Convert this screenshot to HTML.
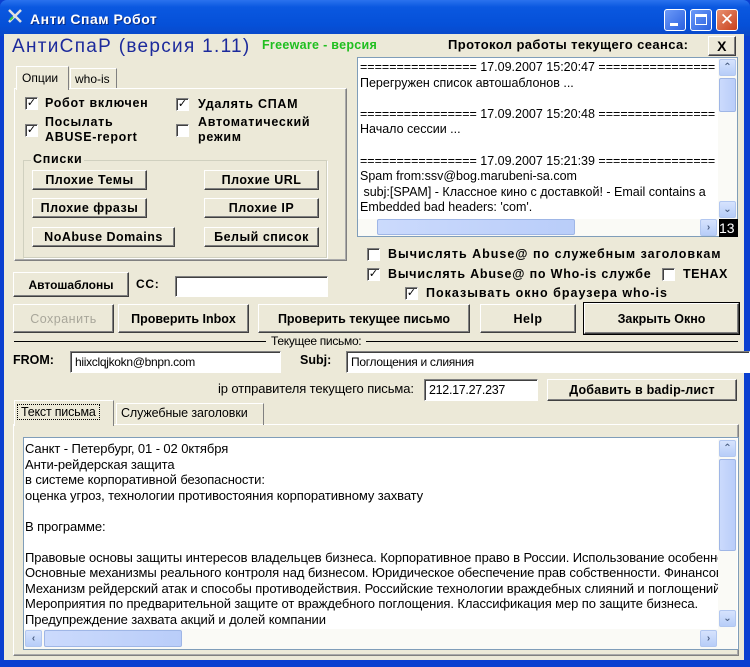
<!DOCTYPE html>
<html><head><meta charset="utf-8"><style>
*{box-sizing:border-box;margin:0;padding:0}
body{width:750px;height:667px;overflow:hidden;background:#0a3fd0;font-family:"Liberation Sans","DejaVu Sans",sans-serif;position:relative}
.a{position:absolute}
.win{left:4px;top:34px;width:740px;height:626px;background:#ece9d8}
.btn{position:absolute;background:#ece9d8;border:1px solid;border-color:#fff #404040 #404040 #fff;box-shadow:inset -1px -1px 0 #808080;font-weight:bold;font-size:12.5px;letter-spacing:0.5px;text-align:center;color:#000;display:flex;align-items:center;justify-content:center;white-space:nowrap}
.cb{position:absolute;width:13px;height:13px;background:#fff;border:1px solid;border-color:#808080 #fff #fff #808080;box-shadow:inset 1px 1px 0 #404040;font-size:11px;line-height:11px;text-align:center;font-weight:bold}
.t{position:absolute;white-space:nowrap;font-size:12.5px;color:#000}
.b{font-weight:bold;letter-spacing:0.7px}
.inp{position:absolute;background:#fff;border:1px solid;border-color:#808080 #fff #fff #808080;box-shadow:inset 1px 1px 0 #404040;font-size:12px;padding:3px 0 0 4px;white-space:nowrap;overflow:hidden}
.sb{position:absolute;background:#fafaf6}
.arr{position:absolute;width:17px;height:17px;background:linear-gradient(#d6e3fd,#b7cdf8);border:1px solid #b2c7f0;border-radius:2px;color:#4d6185;font-size:10px;text-align:center;line-height:15px;font-weight:bold}
.thumb{position:absolute;background:linear-gradient(90deg,#cbdafc,#b9cdf9);border:1px solid #9fb6e6;border-radius:2px}
.log div{height:15.6px;white-space:nowrap;font-size:12.5px}
.txt div{height:15.5px;white-space:nowrap;font-size:13px;letter-spacing:-0.1px}
</style></head><body>
<div class="a" style="left:0;top:0;width:750px;height:36px;background:linear-gradient(#2a72ee,#0a58e0 20%,#0550d8 70%,#0a48c8);border-radius:7px 7px 0 0"></div>
<div class="a" style="left:7px;top:8px;width:16px;height:16px;">
<svg width="16" height="16"><path d="M2 2L14 14M14 2L2 14" stroke="#e0e0e0" stroke-width="2.5"/><path d="M3 12l3-3" stroke="#4c4" stroke-width="2"/></svg></div>
<div class="t" style="left:30px;top:11px;color:#fff;font-size:14px;font-weight:bold;letter-spacing:0.5px;text-shadow:1px 1px #0a2a80">Анти Спам Робот</div>
<div class="a" style="left:664px;top:9px;width:22px;height:22px;background:linear-gradient(135deg,#6c9af8,#2b61e0);border:1px solid #fff;border-radius:3px"><div class="a" style="left:5px;top:13px;width:8px;height:3px;background:#fff"></div></div>
<div class="a" style="left:690px;top:9px;width:22px;height:22px;background:linear-gradient(135deg,#6c9af8,#2b61e0);border:1px solid #fff;border-radius:3px"><div class="a" style="left:4px;top:4px;width:12px;height:11px;border:1px solid #fff;border-top-width:3px"></div></div>
<div class="a" style="left:716px;top:9px;width:22px;height:22px;background:linear-gradient(135deg,#e89070,#c8401c);border:1px solid #fff;border-radius:3px;color:#fff;font-weight:bold;font-size:17px;text-align:center;line-height:20px">✕</div>

<div class="a win"></div>
<div class="t" style="left:12px;top:36px;font-size:19px;color:#1c2a9c;letter-spacing:1.3px">АнтиСпаР (версия 1.11)</div>
<div class="t b" style="left:262px;top:38px;color:#1fbf1f;font-size:12.5px;letter-spacing:0.3px">Freeware - версия</div>
<div class="t b" style="left:448px;top:37px;font-size:13px;letter-spacing:0.4px">Протокол работы текущего сеанса:</div>
<div class="btn" style="left:708px;top:36px;width:28px;height:20px;font-size:14px">X</div>

<div class="a" style="left:357px;top:57px;width:381px;height:180px;background:#fff;border:1px solid #7f9db9"></div>
<div class="a log" style="left:360px;top:60px;width:358px;height:158px;overflow:hidden">
<div>================ 17.09.2007 15:20:47 ================</div>
<div>Перегружен список автошаблонов ...</div><div></div>
<div>================ 17.09.2007 15:20:48 ================</div>
<div>Начало сессии ...</div><div></div>
<div>================ 17.09.2007 15:21:39 ================</div>
<div>Spam from:ssv@bog.marubeni-sa.com</div>
<div>&nbsp;subj:[SPAM] - Классное кино с доставкой! - Email contains a</div>
<div>Embedded bad headers: 'com'.</div>
</div>
<div class="sb" style="left:718px;top:58px;width:19px;height:161px"></div>
<div class="arr" style="left:719px;top:59px">⌃</div>
<div class="thumb" style="left:719px;top:78px;width:17px;height:34px"></div>
<div class="arr" style="left:719px;top:201px">⌄</div>
<div class="sb" style="left:358px;top:219px;width:360px;height:17px"></div>
<div class="thumb" style="left:377px;top:219px;width:198px;height:16px"></div>
<div class="arr" style="left:700px;top:219px">›</div>
<div class="a" style="left:719px;top:219px;width:19px;height:18px;background:#000;color:#fff;font-size:14px;line-height:18px">13</div>

<div class="a" style="left:14px;top:88px;width:333px;height:173px;border:1px solid;border-color:#fff #808080 #808080 #fff;box-shadow:inset -1px -1px 0 #aaa"></div>
<div class="a" style="left:16px;top:66px;width:53px;height:24px;background:#ece9d8;border:1px solid;border-color:#fff #808080 transparent #fff;border-bottom:none"></div>
<div class="t" style="left:22px;top:71px;font-size:12px">Опции</div>
<div class="a" style="left:70px;top:68px;width:47px;height:20px;border:1px solid;border-color:#fff #808080 transparent #fff;border-bottom:none"></div>
<div class="t" style="left:75px;top:72px;font-size:12px">who-is</div>

<div class="cb" style="left:25px;top:97px">✓</div><div class="t b" style="left:45px;top:96px">Робот включен</div>
<div class="cb" style="left:176px;top:98px">✓</div><div class="t b" style="left:198px;top:97px">Удалять СПАМ</div>
<div class="cb" style="left:25px;top:124px">✓</div><div class="t b" style="left:45px;top:115px;line-height:15px">Посылать<br>ABUSE-report</div>
<div class="cb" style="left:176px;top:124px"></div><div class="t b" style="left:198px;top:115px;line-height:15px">Автоматический<br>режим</div>

<div class="a" style="left:23px;top:160px;width:304px;height:98px;border:1px solid;border-color:#d0d0bf;box-shadow:1px 1px 0 #fff"></div>
<div class="t b" style="left:31px;top:152px;background:#ece9d8;padding:0 2px">Списки</div>
<div class="btn" style="left:32px;top:170px;width:115px;height:20px">Плохие Темы</div>
<div class="btn" style="left:204px;top:170px;width:115px;height:20px">Плохие URL</div>
<div class="btn" style="left:32px;top:198px;width:115px;height:20px">Плохие фразы</div>
<div class="btn" style="left:204px;top:198px;width:115px;height:20px">Плохие IP</div>
<div class="btn" style="left:32px;top:227px;width:143px;height:20px">NoAbuse Domains</div>
<div class="btn" style="left:204px;top:227px;width:115px;height:20px">Белый список</div>

<div class="cb" style="left:367px;top:248px"></div><div class="t b" style="left:388px;top:247px;letter-spacing:1px">Вычислять Abuse@ по служебным заголовкам</div>
<div class="cb" style="left:367px;top:268px">✓</div><div class="t b" style="left:388px;top:267px;letter-spacing:0.8px">Вычислять Abuse@ по Who-is службе</div>
<div class="cb" style="left:662px;top:268px"></div><div class="t b" style="left:683px;top:267px;letter-spacing:0.5px">ТЕНАХ</div>
<div class="cb" style="left:405px;top:287px">✓</div><div class="t b" style="left:426px;top:286px;letter-spacing:1px">Показывать окно браузера who-is</div>

<div class="btn" style="left:13px;top:272px;width:116px;height:25px;font-size:12px;letter-spacing:0">Автошаблоны</div>
<div class="t b" style="left:136px;top:277px;font-size:12px">CC:</div>
<div class="inp" style="left:175px;top:276px;width:153px;height:21px"></div>

<div class="btn" style="left:13px;top:304px;width:101px;height:29px;color:#a8a69a;font-weight:normal">Сохранить</div>
<div class="btn" style="left:118px;top:304px;width:131px;height:29px;letter-spacing:0">Проверить Inbox</div>
<div class="btn" style="left:258px;top:304px;width:212px;height:29px;letter-spacing:0">Проверить текущее письмо</div>
<div class="btn" style="left:480px;top:304px;width:96px;height:29px">Help</div>
<div class="btn" style="left:584px;top:303px;width:155px;height:31px;outline:1px solid #000;letter-spacing:0">Закрыть Окно</div>

<div class="a" style="left:14px;top:341px;width:724px;height:1px;background:#000"></div>
<div class="t" style="left:266px;top:334px;background:#ece9d8;padding:0 5px;font-size:12px;letter-spacing:-0.3px">Текущее письмо:</div>

<div class="t b" style="left:13px;top:353px;letter-spacing:0">FROM:</div>
<div class="inp" style="left:70px;top:351px;width:211px;height:22px;letter-spacing:-0.3px">hiixclqjkokn@bnpn.com</div>
<div class="t b" style="left:300px;top:353px;letter-spacing:0">Subj:</div>
<div class="inp" style="left:346px;top:351px;width:404px;height:22px;letter-spacing:-0.3px">Поглощения и слияния</div>

<div class="t" style="left:218px;top:381px;font-size:13px;letter-spacing:-0.1px">ip отправителя текущего письма:</div>
<div class="inp" style="left:424px;top:379px;width:114px;height:22px;letter-spacing:-0.3px;font-size:12.5px">212.17.27.237</div>
<div class="btn" style="left:547px;top:379px;width:190px;height:22px;letter-spacing:0.2px">Добавить в badip-лист</div>

<div class="a" style="left:13px;top:424px;width:726px;height:232px;border:1px solid;border-color:#fff #808080 #808080 #fff;box-shadow:inset -1px -1px 0 #aaa"></div>
<div class="a" style="left:14px;top:400px;width:100px;height:26px;background:#ece9d8;border:1px solid;border-color:#fff #808080 transparent #fff;border-bottom:none"></div>
<div class="t" style="left:17px;top:404px;border:1px dotted #000;padding:0 3px;font-size:12.5px;letter-spacing:-0.2px">Текст письма</div>
<div class="a" style="left:116px;top:403px;width:148px;height:22px;border:1px solid;border-color:#fff #808080 transparent #fff;border-bottom:none"></div>
<div class="t" style="left:121px;top:406px;font-size:12.5px;letter-spacing:-0.1px">Служебные заголовки</div>

<div class="a" style="left:23px;top:437px;width:716px;height:213px;background:#fff;border:1px solid #7f9db9"></div>
<div class="a txt" style="left:25px;top:441px;width:693px;height:188px;overflow:hidden">
<div>Санкт - Петербург, 01 - 02 0ктября</div>
<div>Анти-рейдерская защита</div>
<div>в системе корпоративной безопасности:</div>
<div>оценка угроз, технологии противостояния корпоративному захвату</div>
<div></div>
<div>В программе:</div>
<div></div>
<div>Правовые основы защиты интересов владельцев бизнеса. Корпоративное право в России. Использование особенностей</div>
<div>Основные механизмы реального контроля над бизнесом. Юридическое обеспечение прав собственности. Финансовые</div>
<div>Механизм рейдерский атак и способы противодействия. Российские технологии враждебных слияний и поглощений</div>
<div>Мероприятия по предварительной защите от враждебного поглощения. Классификация мер по защите бизнеса.</div>
<div>Предупреждение захвата акций и долей компании</div>
</div>
<div class="sb" style="left:718px;top:439px;width:19px;height:190px"></div>
<div class="arr" style="left:719px;top:440px">⌃</div>
<div class="thumb" style="left:719px;top:459px;width:17px;height:92px"></div>
<div class="arr" style="left:719px;top:610px">⌄</div>
<div class="sb" style="left:24px;top:629px;width:713px;height:20px"></div>
<div class="arr" style="left:25px;top:630px">‹</div>
<div class="thumb" style="left:44px;top:630px;width:138px;height:17px"></div>
<div class="arr" style="left:700px;top:630px">›</div>
</body></html>
